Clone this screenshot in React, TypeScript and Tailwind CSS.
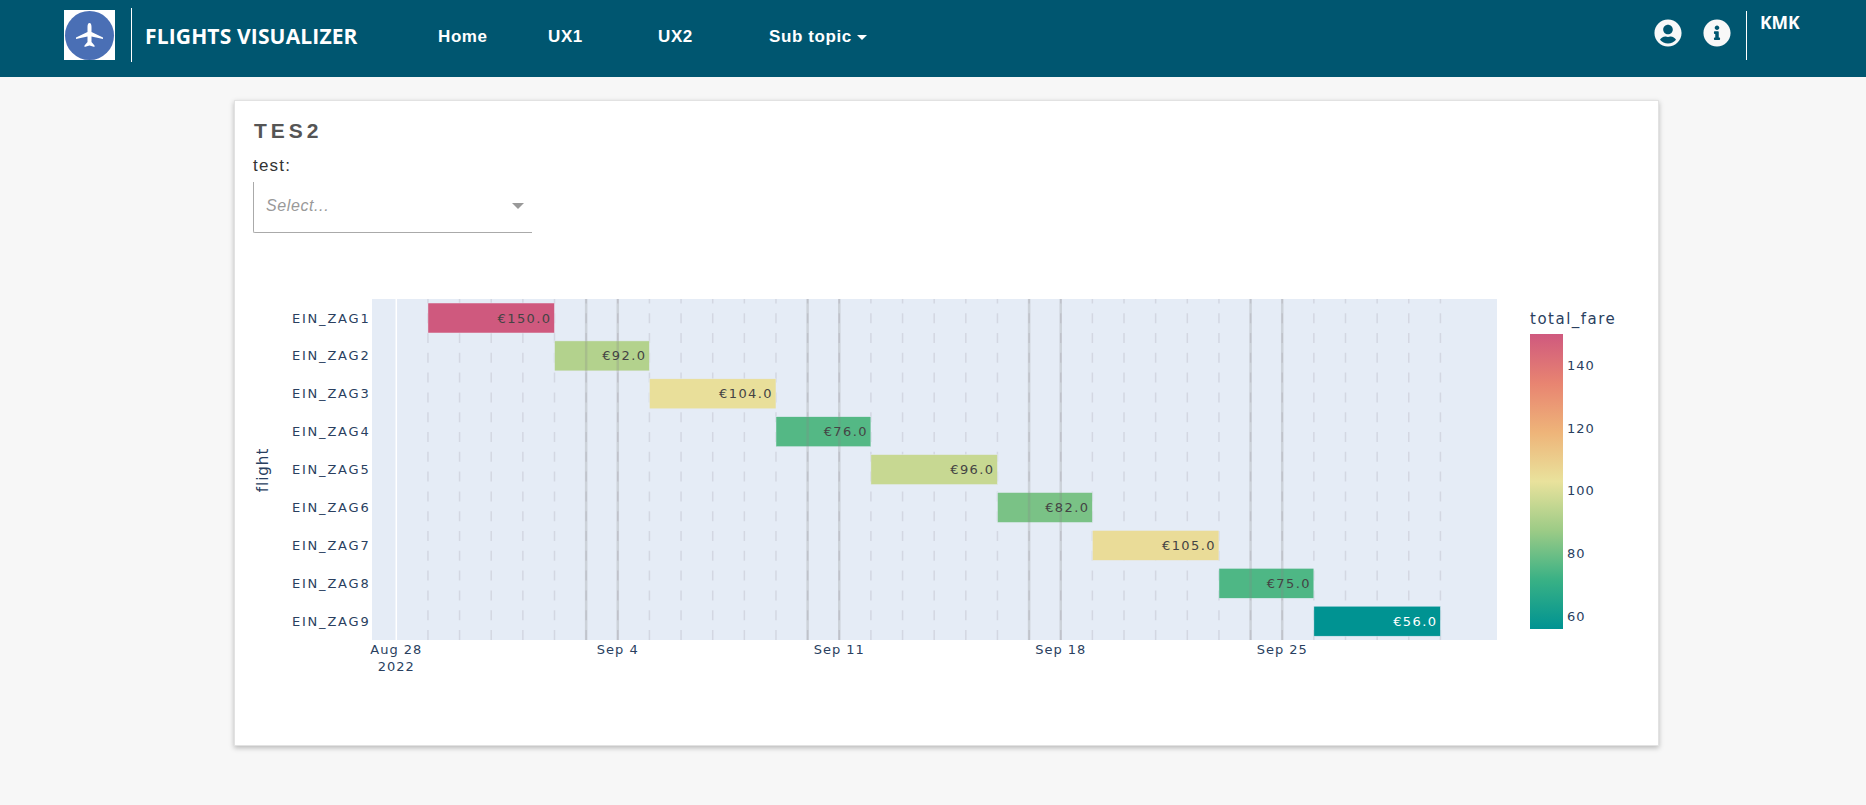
import React from "react";
import { FaInfoCircle, FaUserCircle } from "react-icons/fa";

// plotly "temps" colorscale, evenly spaced
const temps = ["#009392", "#39b185", "#9ccb86", "#e9e29c", "#eeb479", "#e88471", "#cf597e"];

const minFare = 56;
const maxFare = 150;

const fareColor = (fare: number) => {
  const t = ((fare - minFare) / (maxFare - minFare)) * (temps.length - 1);
  const i = Math.min(Math.floor(t), temps.length - 2);
  const f = t - i;
  const rgb = [1, 3, 5].map((p) => {
    const a = parseInt(temps[i].slice(p, p + 2), 16);
    const b = parseInt(temps[i + 1].slice(p, p + 2), 16);
    return Math.round(a + (b - a) * f);
  });
  return `rgb(${rgb.join(",")})`;
};

// start/end are days after Aug 28
const flights = [
  { name: "EIN_ZAG1", start: 1, end: 5, fare: 150 },
  { name: "EIN_ZAG2", start: 5, end: 8, fare: 92 },
  { name: "EIN_ZAG3", start: 8, end: 12, fare: 104 },
  { name: "EIN_ZAG4", start: 12, end: 15, fare: 76 },
  { name: "EIN_ZAG5", start: 15, end: 19, fare: 96 },
  { name: "EIN_ZAG6", start: 19, end: 22, fare: 82 },
  { name: "EIN_ZAG7", start: 22, end: 26, fare: 105 },
  { name: "EIN_ZAG8", start: 26, end: 29, fare: 75 },
  { name: "EIN_ZAG9", start: 29, end: 33, fare: 56 },
];

const plotLeft = 372;
const plotRight = 1497;
const plotTop = 299;
const plotBottom = 640;
const dayX = (day: number) => 396.3 + day * 31.64;
const rowY = (row: number) => plotTop + 19 + row * 37.9;

const days = Array.from({ length: 34 }, (_, d) => d);
const weekends = [6, 7, 13, 14, 20, 21, 27, 28];
const xTicks = [
  { day: 7, label: "Sep 4" },
  { day: 14, label: "Sep 11" },
  { day: 21, label: "Sep 18" },
  { day: 28, label: "Sep 25" },
];
const barTicks = [140, 120, 100, 80, 60];

const GanttChart = () => {
  return (
    <svg viewBox="250 280 1390 410" className="w-[1390px] h-[410px] block">
      <defs>
        <linearGradient id="temps" x1="0" y1="1" x2="0" y2="0">
          {temps.map((c, i) => (
            <stop key={c} offset={i / (temps.length - 1)} stopColor={c} />
          ))}
        </linearGradient>
      </defs>

      {/* Plot area */}
      <rect x={plotLeft} y={plotTop} width={plotRight - plotLeft} height={plotBottom - plotTop} fill="#e5ecf6" />
      <line x1={dayX(0)} x2={dayX(0)} y1={plotTop} y2={plotBottom} stroke="#ffffff" strokeWidth={1.5} />
      {days.slice(1).map((d) => (
        <line
          key={d}
          x1={dayX(d)}
          x2={dayX(d)}
          y1={plotBottom}
          y2={plotTop}
          stroke="#d3d7e2"
          strokeWidth={1.5}
          strokeDasharray="10 9.8"
        />
      ))}

      {/* Bars */}
      {flights.map((f, row) => (
        <rect
          key={f.name}
          x={dayX(f.start)}
          y={rowY(row) - 15}
          width={dayX(f.end) - dayX(f.start)}
          height={30}
          fill={fareColor(f.fare)}
          stroke="#e5ecf6"
          strokeWidth={0.5}
        />
      ))}

      {/* Weekend lines go over the bars */}
      {weekends.map((d) => (
        <line
          key={d}
          x1={dayX(d)}
          x2={dayX(d)}
          y1={plotTop}
          y2={plotBottom}
          stroke="#888888"
          strokeOpacity={0.26}
          strokeWidth={2.5}
        />
      ))}

      {flights.map((f, row) => (
        <text
          key={f.name}
          x={dayX(f.end) - 3}
          y={rowY(row) + 4.5}
          textAnchor="end"
          className={
            f.fare === 56
              ? "font-['DejaVu_Sans'] text-[13px] tracking-[1.4px] fill-white"
              : "font-['DejaVu_Sans'] text-[13px] tracking-[1.4px] fill-[#444444]"
          }
        >
          €{f.fare}.0
        </text>
      ))}

      {/* Y axis */}
      {flights.map((f, row) => (
        <text
          key={f.name}
          x={370.5}
          y={rowY(row) + 4.5}
          textAnchor="end"
          className="font-['DejaVu_Sans'] text-[13px] tracking-[1.8px] fill-[#2a3f5f]"
        >
          {f.name}
        </text>
      ))}
      <text
        transform="translate(268 470) rotate(-90)"
        textAnchor="middle"
        className="font-['DejaVu_Sans'] text-[15px] tracking-[1px] fill-[#2a3f5f]"
      >
        flight
      </text>

      {/* X axis */}
      <text x={dayX(0)} y={654} textAnchor="middle" className="font-['DejaVu_Sans'] text-[13px] tracking-[1px] fill-[#2a3f5f]">
        Aug 28
      </text>
      <text x={dayX(0)} y={671} textAnchor="middle" className="font-['DejaVu_Sans'] text-[13px] tracking-[1px] fill-[#2a3f5f]">
        2022
      </text>
      {xTicks.map((t) => (
        <text
          key={t.label}
          x={dayX(t.day)}
          y={654}
          textAnchor="middle"
          className="font-['DejaVu_Sans'] text-[13px] tracking-[1px] fill-[#2a3f5f]"
        >
          {t.label}
        </text>
      ))}

      {/* Colorbar */}
      <text x={1530} y={324} className="font-['DejaVu_Sans'] text-[15px] tracking-[1.5px] fill-[#2a3f5f]">
        total_fare
      </text>
      <rect x={1530} y={334} width={33} height={295} fill="url(#temps)" />
      {barTicks.map((t) => (
        <text
          key={t}
          x={1567}
          y={334 + (maxFare - t) * 3.138 + 4.5}
          className="font-['DejaVu_Sans'] text-[13px] tracking-[1px] fill-[#2a3f5f]"
        >
          {t}
        </text>
      ))}
    </svg>
  );
};

const NavLink = ({ label, className }: { label: string; className: string }) => (
  <a className={`font-['Liberation_Sans'] font-bold text-[17px] tracking-[0.6px] text-white ${className}`}>{label}</a>
);

const App = () => {
  return (
    <div className="min-h-screen bg-[#f7f7f7] font-['Liberation_Sans',sans-serif]">
      {/* Navbar */}
      <header className="h-[77px] bg-[#005670] flex items-center text-white">
        <div className="ml-[64px] -mt-[7px] w-[51px] h-[50px] bg-white flex items-center justify-center shrink-0">
          <div className="w-[49px] h-[49px] rounded-full bg-[#4a6fb5] flex items-center justify-center">
            <svg viewBox="0 0 27 24" className="w-[27px] h-[24px] -mt-[1px]" fill="#ffffff">
              <path d="M13.5 0C12 0 11.5 2 11.5 4V9L0 14.5V16L11.5 13.5V19L8.5 22.5V24L13.5 22.5L18.5 24V22.5L15.5 19V13.5L27 16V14.5L15.5 9V4C15.5 2 15 0 13.5 0Z" />
            </svg>
          </div>
        </div>
        <div className="ml-[16px] -mt-[7px] w-px h-[54px] bg-white shrink-0" />
        <h1 className="ml-[13px] -mt-[4px] w-[293px] shrink-0 font-['Open_Sans'] font-bold text-[21px] tracking-[0.15px] leading-none">
          FLIGHTS VISUALIZER
        </h1>
        <nav className="flex items-center -mt-[3px]">
          <NavLink label="Home" className="w-[110px]" />
          <NavLink label="UX1" className="w-[110px]" />
          <NavLink label="UX2" className="w-[111px]" />
          <NavLink label="Sub topic" className="" />
          <span className="ml-[5px] w-0 h-0 border-x-[5px] border-x-transparent border-t-[5px] border-t-white" />
        </nav>
        <div className="ml-auto flex items-center mr-[66px]">
          <FaUserCircle className="w-[28px] h-[28px] text-[#f8f8f8] -mt-[11px]" />
          <FaInfoCircle className="ml-[21px] w-[28px] h-[28px] text-[#f8f8f8] -mt-[11px]" />
          <div className="ml-[15px] w-px h-[49px] bg-white -mt-[6px]" />
          <span className="ml-[13px] w-[40px] self-start -mt-[5px] font-['Open_Sans'] font-bold text-[17.5px] leading-[20px]">KMK</span>
        </div>
      </header>

      {/* Card */}
      <main className="pt-[23px]">
        <section className="ml-[234px] w-[1425px] h-[646px] bg-white border border-[#e2e2e2] shadow-[0_2px_5px_rgba(0,0,0,0.25)] pl-[18px]">
          <h2 className="ml-[1px] pt-[15px] font-bold text-[21px] leading-[30px] tracking-[4px] text-[#555555]">TES2</h2>
          <label className="block mt-[9px] text-[17px] leading-[22px] tracking-[1.2px] text-[#333333]">test:</label>
          <div className="mt-[5px] w-[279px] h-[51px] border-l border-b border-[#aaaaaa] rounded-bl-[2px] flex items-center justify-between pl-[12px] pr-[8px]">
            <span className="italic text-[16px] tracking-[0.6px] -mt-[2px] text-[#999999]">Select...</span>
            <span className="w-0 h-0 border-x-[6px] border-x-transparent border-t-[6px] border-t-[#999999] -mt-[2px]" />
          </div>
          <div className="-ml-[3px] mt-[47px]">
            <GanttChart />
          </div>
        </section>
      </main>
    </div>
  );
};

export default App;
